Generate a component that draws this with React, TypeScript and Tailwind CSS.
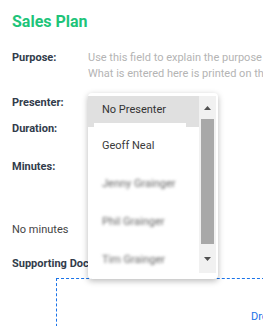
import React from 'react';

const names = [
  { label: 'No Presenter', blurred: false },
  { label: 'Geoff Neal', blurred: false },
  { label: 'Jenny Grainger', blurred: true },
  { label: 'Phil Grainger', blurred: true },
  { label: 'Tim Grainger', blurred: true },
];

function PresenterDropdown() {
  return (
    <div className="absolute left-[88px] top-[93px] w-[130px] h-[186px] bg-white rounded-[4px] shadow-[0_2px_6px_rgba(0,0,0,0.28)] flex pt-[3px] pb-[6px] pr-[2px] overflow-hidden">
      <div className="flex-1 flex flex-col">
        {names.map((n, i) => (
          <div
            key={n.label}
            className={`relative flex shrink-0 pl-[14px] text-[11px] leading-[14px] ${
              i === 0 ? 'h-[31px] pt-[7px] bg-[#e0e0e0] text-[#333]' : 'h-[38px] items-center'
            } ${n.blurred ? 'text-[#666] blur-[1.4px]' : 'text-[#3a3a3a]'}`}
          >
            {n.label}
            {i === 0 && <div className="absolute left-[6px] bottom-0 w-[92px] h-[4px] bg-white" />}
          </div>
        ))}
      </div>
      {/* Scrollbar */}
      <div className="w-[17px] bg-[#f1f1f1] flex flex-col items-center">
        <div className="h-[23px] flex items-center justify-center">
          <svg width="7" height="4" viewBox="0 0 7 4"><path d="M0 4 L3.5 0 L7 4 Z" fill="#505050" /></svg>
        </div>
        <div className="w-[13px] h-[125px] bg-[#a8a8a8]" />
        <div className="flex-1 flex items-center justify-center">
          <svg width="7" height="4" viewBox="0 0 7 4"><path d="M0 0 L7 0 L3.5 4 Z" fill="#505050" /></svg>
        </div>
      </div>
    </div>
  );
}

export default function App() {
  return (
    <div className="relative w-full h-[326px] overflow-hidden bg-white font-['Roboto',sans-serif]">
      <div className="pl-[12px]">
        <h1 className="pt-[12px] text-[16px] leading-[20px] font-bold text-[#1ec47a]">Sales Plan</h1>

        <div className="mt-[18px] grid grid-cols-[76px_1fr] text-[11px] leading-[16px]">
          <span className="font-bold text-[#323c4b]">Purpose:</span>
          <div className="text-[#b4b4b4] whitespace-nowrap">
            <div>Use this field to explain the purpose of this presentation.</div>
            <div>What is entered here is printed on the agenda.</div>
          </div>
        </div>

        <div className="mt-[13px] text-[11px] leading-[16px] font-bold text-[#323c4b]">Presenter:</div>
        <div className="mt-[10px] text-[11px] leading-[16px] font-bold text-[#323c4b]">Duration:</div>
        <div className="mt-[22px] text-[11px] leading-[16px] font-bold text-[#323c4b]">Minutes:</div>
        <div className="mt-[47px] text-[11px] leading-[16px] text-[#444]">No minutes</div>
        <div className="mt-[18px] text-[11px] leading-[16px] font-bold text-[#323c4b] whitespace-nowrap">Supporting Documents:</div>

        <div className="mt-[6px] ml-[44px] w-[420px] h-[120px] border border-dashed border-[#1a73e8] pt-[24px] pl-[194px]">
          <span className="text-[11px] leading-[16px] text-[#1a73e8] whitespace-nowrap">Drop files here or click to upload</span>
        </div>
      </div>
      <PresenterDropdown />
    </div>
  );
}
